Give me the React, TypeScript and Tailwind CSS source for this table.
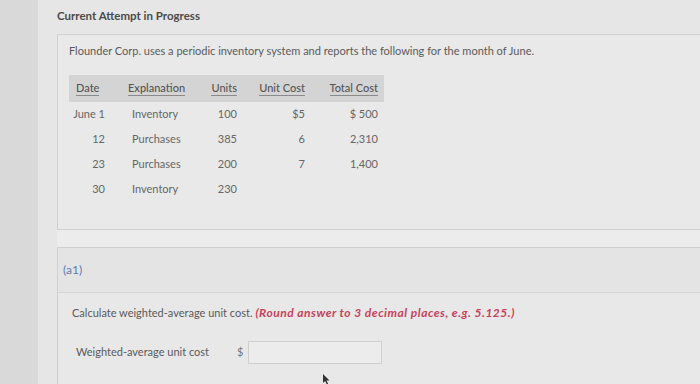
import React from "react";

const rows = [
  { date: "June 1", exp: "Inventory", units: "100", unitCost: "$5", total: "$ 500" },
  { date: "12", exp: "Purchases", units: "385", unitCost: "6", total: "2,310" },
  { date: "23", exp: "Purchases", units: "200", unitCost: "7", total: "1,400" },
  { date: "30", exp: "Inventory", units: "230", unitCost: "", total: "" },
];

function HeaderCell({ children }: { children: React.ReactNode }) {
  return <span className="inline-block border-b border-[#8a8a8a] leading-[13px] pb-[1px]">{children}</span>;
}

export default function App() {
  return (
    <div className="w-[700px] h-[384px] flex bg-[#e3e3e3] text-[#585858] overflow-hidden relative" style={{ fontFamily: "Lato, 'Open Sans', sans-serif" }}>
      {/* left strip */}
      <div className="w-[38px] shrink-0 bg-[#d9d9d9]" />

      <div className="flex-1 pl-[19px] flex flex-col bg-[#e6e6e6]">
        <div className="h-[34px] pt-[7px] text-[11.5px] font-bold text-[#4a4a4a]">Current Attempt in Progress</div>

        {/* problem panel */}
        <div className="h-[196px] border border-r-0 border-[#d0d0d0] bg-[#e9e9e9] pl-[11px] pt-[9px]">
          <p className="text-[11px] text-[#5a5a5a] leading-[14px]">
            Flounder Corp. uses a periodic inventory system and reports the following for the month of June.
          </p>

          <div className="mt-[17px] w-[315px] text-[11px]">
            <div className="flex h-[27px] items-center bg-[#d4d4d4] text-[#555] font-medium">
              <div className="w-[42px] pl-[7px]"><HeaderCell>Date</HeaderCell></div>
              <div className="w-[88px] pl-[17px]"><HeaderCell>Explanation</HeaderCell></div>
              <div className="w-[47px] text-right pr-[9px]"><HeaderCell>Units</HeaderCell></div>
              <div className="w-[69px] text-right pr-[10px]"><HeaderCell>Unit Cost</HeaderCell></div>
              <div className="w-[69px] text-right pr-[6px]"><HeaderCell>Total Cost</HeaderCell></div>
            </div>
            {rows.map((r, i) => (
              <div key={i} className="flex h-[25px] items-center text-[#666]">
                <div className="w-[42px] text-right pr-[6px]">{r.date}</div>
                <div className="w-[88px] pl-[21px]">{r.exp}</div>
                <div className="w-[47px] text-right pr-[9px]">{r.units}</div>
                <div className="w-[69px] text-right pr-[10px]">{r.unitCost}</div>
                <div className="w-[69px] text-right pr-[6px]">{r.total}</div>
              </div>
            ))}
          </div>
        </div>

        <div className="h-[17px] bg-[#ececec]" />

        {/* question panel */}
        <div className="flex-1 border-t border-l border-[#d0d0d0] bg-[#e8e8e8]">
          <div className="h-[45px] border-b border-[#d6d6d6] bg-[#e4e4e4] pl-[5px] flex items-center">
            <span className="text-[12px] text-[#5b7cb0]">(a1)</span>
          </div>
          <div className="pl-[14px] pt-[11px]">
            <p className="text-[11px] text-[#5a5a5a]">
              Calculate weighted-average unit cost.{" "}
              <span className="text-[12px] tracking-[0.5px] font-bold italic text-[#c8415a]">(Round answer to 3 decimal places, e.g. 5.125.)</span>
            </p>
            <div className="mt-[19px] flex items-center pl-[4px]">
              <span className="w-[161px] text-[11px] text-[#5a5a5a]">Weighted-average unit cost</span>
              <span className="w-[11px] text-[11px] text-[#777]">$</span>
              <div className="w-[134px] h-[23px] border border-[#cfcfcf] bg-[#ececec]" />
            </div>
          </div>
        </div>
      </div>

      {/* mouse cursor */}
      <svg className="absolute left-[323px] top-[374px]" width="8" height="11" viewBox="0 0 8 11">
        <path d="M0 0 L0 9 L2.2 7 L4 11 L5.3 10.4 L3.6 6.6 L6.5 6.6 Z" fill="#333" />
      </svg>
    </div>
  );
}
